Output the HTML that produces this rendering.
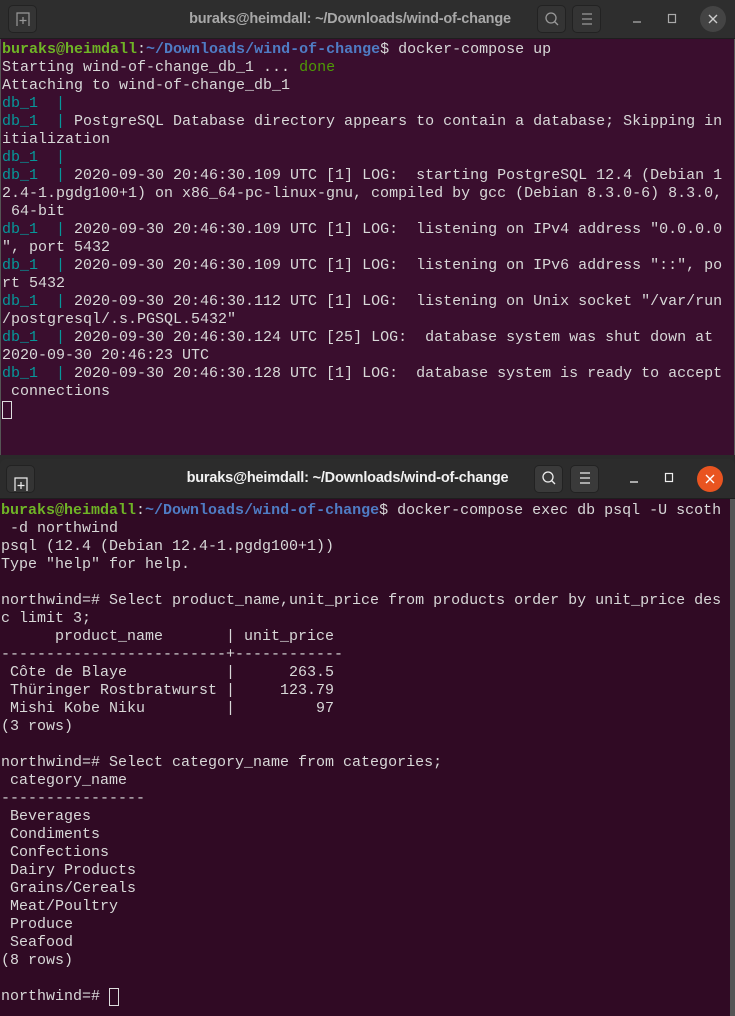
<!DOCTYPE html>
<html><head><meta charset="utf-8"><style>
*{margin:0;padding:0;box-sizing:border-box}
body{width:735px;height:1016px;background:#2a2a2a;overflow:hidden;position:relative;font-family:"Liberation Mono",monospace}
.tb{position:absolute;left:0;width:735px;height:39px;background:#2e2e2e;border-bottom:1px solid #1e1e1e}
.title{position:absolute;top:0;left:0;width:700px;text-align:center;line-height:38px;font-family:"Liberation Sans",sans-serif;font-weight:bold;font-size:14.5px;letter-spacing:-0.2px}
.btn{position:absolute;top:5px;width:29px;height:28px;border:1px solid #222;background:#343434;border-radius:5px}
.term{position:absolute;left:0;width:735px;overflow:hidden}
pre{font-family:"Liberation Mono",monospace;font-size:15px;line-height:18px;color:#d8d8d8;white-space:pre;padding-left:1px}
.g{color:#6fb426;font-weight:bold}.b{color:#4f7cc4;font-weight:bold}.c{color:#06989a}.d{color:#4e9a06}
.cur{display:inline-block;width:10px;height:18px;border:1px solid #ddd;vertical-align:top}
.ic{position:absolute;color:#bbb;font-family:"DejaVu Sans",sans-serif}
</style></head><body>
<!-- top window -->
<div class="tb" style="top:0">
 <div class="btn" style="left:8px"></div>
 <svg class="ic" style="left:15px;top:11px" width="16" height="16"><path d="M2 15V2h12v13M8 6v7M4.5 9.5h7" stroke="#999" fill="none" stroke-width="1.2"/></svg>
 <div class="title" style="color:#a8a8a8;left:0;width:700px">buraks@heimdall: ~/Downloads/wind-of-change</div>
 <div class="btn" style="left:537px"></div>
 <svg style="position:absolute;left:544px;top:11px" width="16" height="16"><circle cx="7" cy="7" r="5" stroke="#999" fill="none" stroke-width="1.3"/><path d="M10.5 10.5L14 14" stroke="#999" stroke-width="1.3"/></svg>
 <div class="btn" style="left:572px"></div>
 <svg style="position:absolute;left:580px;top:12px" width="14" height="14"><path d="M2 2h10M2 7h10M2 12h10" stroke="#999" stroke-width="1.2"/></svg>
 <svg style="position:absolute;left:631px;top:12px" width="14" height="14"><path d="M2 10h8" stroke="#aaa" stroke-width="1.3"/></svg>
 <svg style="position:absolute;left:666px;top:12px" width="14" height="14"><rect x="2.5" y="2.5" width="7" height="8" stroke="#aaa" fill="none" stroke-width="1.2"/></svg>
 <div style="position:absolute;left:700px;top:6px;width:26px;height:26px;border-radius:13px;background:#444"></div>
 <svg style="position:absolute;left:707px;top:13px" width="12" height="12"><path d="M2 2l8 8M10 2l-8 8" stroke="#ccc" stroke-width="1.4"/></svg>
</div>
<div class="term" style="top:39px;height:416px;background:#3a0e2e;border-left:1px solid #555;border-right:1px solid #555">
<pre style="padding-top:2px"><span class="g">buraks@heimdall</span>:<span class="b">~/Downloads/wind-of-change</span>$ docker-compose up
Starting wind-of-change_db_1 ... <span class="d">done</span>
Attaching to wind-of-change_db_1
<span class="c">db_1  |</span>
<span class="c">db_1  |</span> PostgreSQL Database directory appears to contain a database; Skipping in
itialization
<span class="c">db_1  |</span>
<span class="c">db_1  |</span> 2020-09-30 20:46:30.109 UTC [1] LOG:  starting PostgreSQL 12.4 (Debian 1
2.4-1.pgdg100+1) on x86_64-pc-linux-gnu, compiled by gcc (Debian 8.3.0-6) 8.3.0,
 64-bit
<span class="c">db_1  |</span> 2020-09-30 20:46:30.109 UTC [1] LOG:  listening on IPv4 address "0.0.0.0
", port 5432
<span class="c">db_1  |</span> 2020-09-30 20:46:30.109 UTC [1] LOG:  listening on IPv6 address "::", po
rt 5432
<span class="c">db_1  |</span> 2020-09-30 20:46:30.112 UTC [1] LOG:  listening on Unix socket "/var/run
/postgresql/.s.PGSQL.5432"
<span class="c">db_1  |</span> 2020-09-30 20:46:30.124 UTC [25] LOG:  database system was shut down at
2020-09-30 20:46:23 UTC
<span class="c">db_1  |</span> 2020-09-30 20:46:30.128 UTC [1] LOG:  database system is ready to accept
 connections
<span class="cur"></span></pre>
</div>
<!-- bottom window -->
<div class="tb" style="top:459px;height:40px;background:#2c2c2c;border-radius:6px 6px 0 0">
 <div class="btn" style="left:6px;top:6px"></div>
 <svg style="position:absolute;left:13px;top:17px" width="16" height="16"><path d="M2 15V2h12v13M8 6v7M4.5 9.5h7" stroke="#eee" fill="none" stroke-width="1.2"/></svg>
 <div class="title" style="color:#f2f2f2;left:0;width:695px;top:0">buraks@heimdall: ~/Downloads/wind-of-change</div>
 <div class="btn" style="left:534px;top:6px;background:#3a3a3a"></div>
 <svg style="position:absolute;left:541px;top:11px" width="16" height="16"><circle cx="7" cy="7" r="5" stroke="#eee" fill="none" stroke-width="1.3"/><path d="M10.5 10.5L14 14" stroke="#eee" stroke-width="1.3"/></svg>
 <div class="btn" style="left:570px;top:6px;background:#3a3a3a"></div>
 <svg style="position:absolute;left:578px;top:12px" width="14" height="14"><path d="M2 2h10M2 7h10M2 12h10" stroke="#eee" stroke-width="1.2"/></svg>
 <svg style="position:absolute;left:628px;top:13px" width="14" height="14"><path d="M2 10h8" stroke="#eee" stroke-width="1.3"/></svg>
 <svg style="position:absolute;left:663px;top:12px" width="14" height="14"><rect x="2.5" y="2.5" width="7" height="8" stroke="#eee" fill="none" stroke-width="1.2"/></svg>
 <div style="position:absolute;left:697px;top:7px;width:26px;height:26px;border-radius:13px;background:#e95420"></div>
 <svg style="position:absolute;left:704px;top:14px" width="12" height="12"><path d="M2 2l8 8M10 2l-8 8" stroke="#fff" stroke-width="1.4"/></svg>
</div>
<div class="term" style="top:499px;height:517px;background:#300a24">
<pre style="padding-top:3px"><span class="g">buraks@heimdall</span>:<span class="b">~/Downloads/wind-of-change</span>$ docker-compose exec db psql -U scoth
 -d northwind
psql (12.4 (Debian 12.4-1.pgdg100+1))
Type "help" for help.

northwind=# Select product_name,unit_price from products order by unit_price des
c limit 3;
      product_name       | unit_price
-------------------------+------------
 Côte de Blaye           |      263.5
 Thüringer Rostbratwurst |     123.79
 Mishi Kobe Niku         |         97
(3 rows)

northwind=# Select category_name from categories;
 category_name
----------------
 Beverages
 Condiments
 Confections
 Dairy Products
 Grains/Cereals
 Meat/Poultry
 Produce
 Seafood
(8 rows)

northwind=# <span class="cur"></span></pre>
<div style="position:absolute;right:0;top:0;width:5px;height:517px;background:#555"></div>
</div>
</body></html>
